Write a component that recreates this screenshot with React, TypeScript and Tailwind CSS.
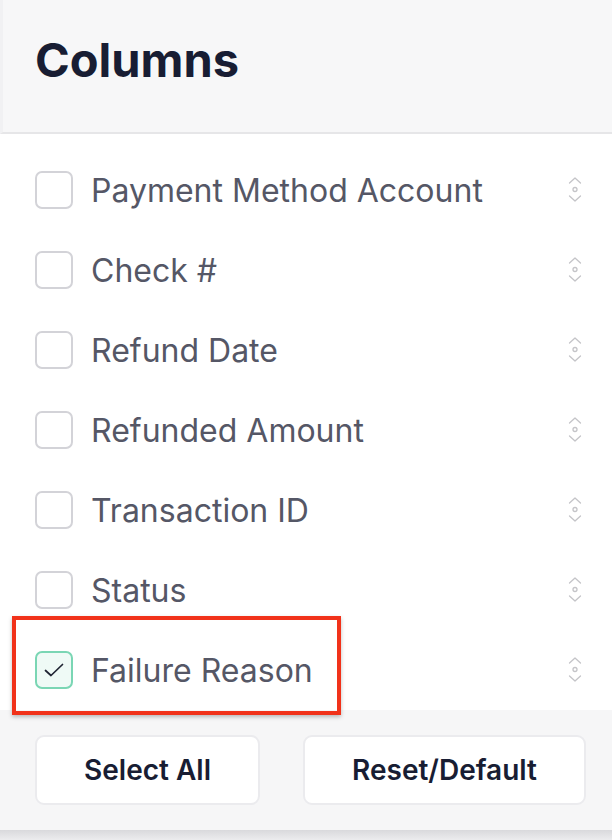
import React from "react";

const rows = [
  { label: "Payment Method Account", checked: false },
  { label: "Check #", checked: false },
  { label: "Refund Date", checked: false },
  { label: "Refunded Amount", checked: false },
  { label: "Transaction ID", checked: false },
  { label: "Status", checked: false },
  { label: "Failure Reason", checked: true },
];

function DragIcon() {
  return (
    <svg width="16" height="28" viewBox="0 0 16 28" fill="none" stroke="#c4c4c8" strokeWidth="1.3" strokeLinecap="round" strokeLinejoin="round">
      <path d="M2.5 7 L8 2 L13.5 7" />
      <circle cx="8" cy="13.5" r="2" />
      <path d="M2.5 20 L8 25 L13.5 20" />
    </svg>
  );
}

export default function App() {
  return (
    <div className="relative w-[612px] h-[840px] bg-white overflow-hidden" style={{ fontFamily: "Inter, 'Noto Sans', sans-serif" }}>
      <div className="h-[134px] bg-[#f7f7f8] border-b-2 border-[#e6e6e8] border-l-[3px] border-l-[#f1f1f3] pl-[32px] pt-[36px]">
        <h1 className="text-[47px] leading-none font-bold text-[#181d33]">Columns</h1>
      </div>
      <div className="pt-[16px]">
        {rows.map((r) => (
          <div key={r.label} className="h-[80px] flex items-center pl-[35px] pr-[29px]">
            {r.checked ? (
              <div className="w-[38px] h-[38px] rounded-[7px] border-2 border-[#7ad6b4] bg-[#effaf6] flex items-center justify-center">
                <svg width="24" height="24" viewBox="0 0 24 24" fill="none" stroke="#1f2433" strokeWidth="1.7" strokeLinecap="round" strokeLinejoin="round">
                  <path d="M3.5 12.5 L9 17.5 L20.5 6.5" />
                </svg>
              </div>
            ) : (
              <div className="w-[38px] h-[38px] rounded-[7px] border-2 border-[#d3d3d8] bg-white" />
            )}
            <span className="ml-[18px] pt-[1px] text-[32px] text-[#555766] leading-none flex-1">{r.label}</span>
            <DragIcon />
          </div>
        ))}
      </div>
      <div className="h-[120px] bg-[#f6f6f7] flex items-start gap-[43px] pl-[35px] pr-[26px] pt-[25px]">
        <button className="w-[225px] h-[70px] bg-white border-2 border-[#ebebee] rounded-[9px] text-[28px] font-semibold text-[#181d33]">Select All</button>
        <button className="w-[283px] h-[70px] bg-white border-2 border-[#ebebee] rounded-[9px] text-[28px] font-semibold text-[#181d33]">Reset/Default</button>
      </div>
      <div className="h-[10px] bg-gradient-to-b from-[#d9d9dc] to-[#ececee]" />
      <div className="absolute left-[12px] top-[616px] w-[329px] h-[99px] border-[4px] border-[#f1321a] shadow-[0_2px_4px_rgba(0,0,0,0.25)]" />
    </div>
  );
}
